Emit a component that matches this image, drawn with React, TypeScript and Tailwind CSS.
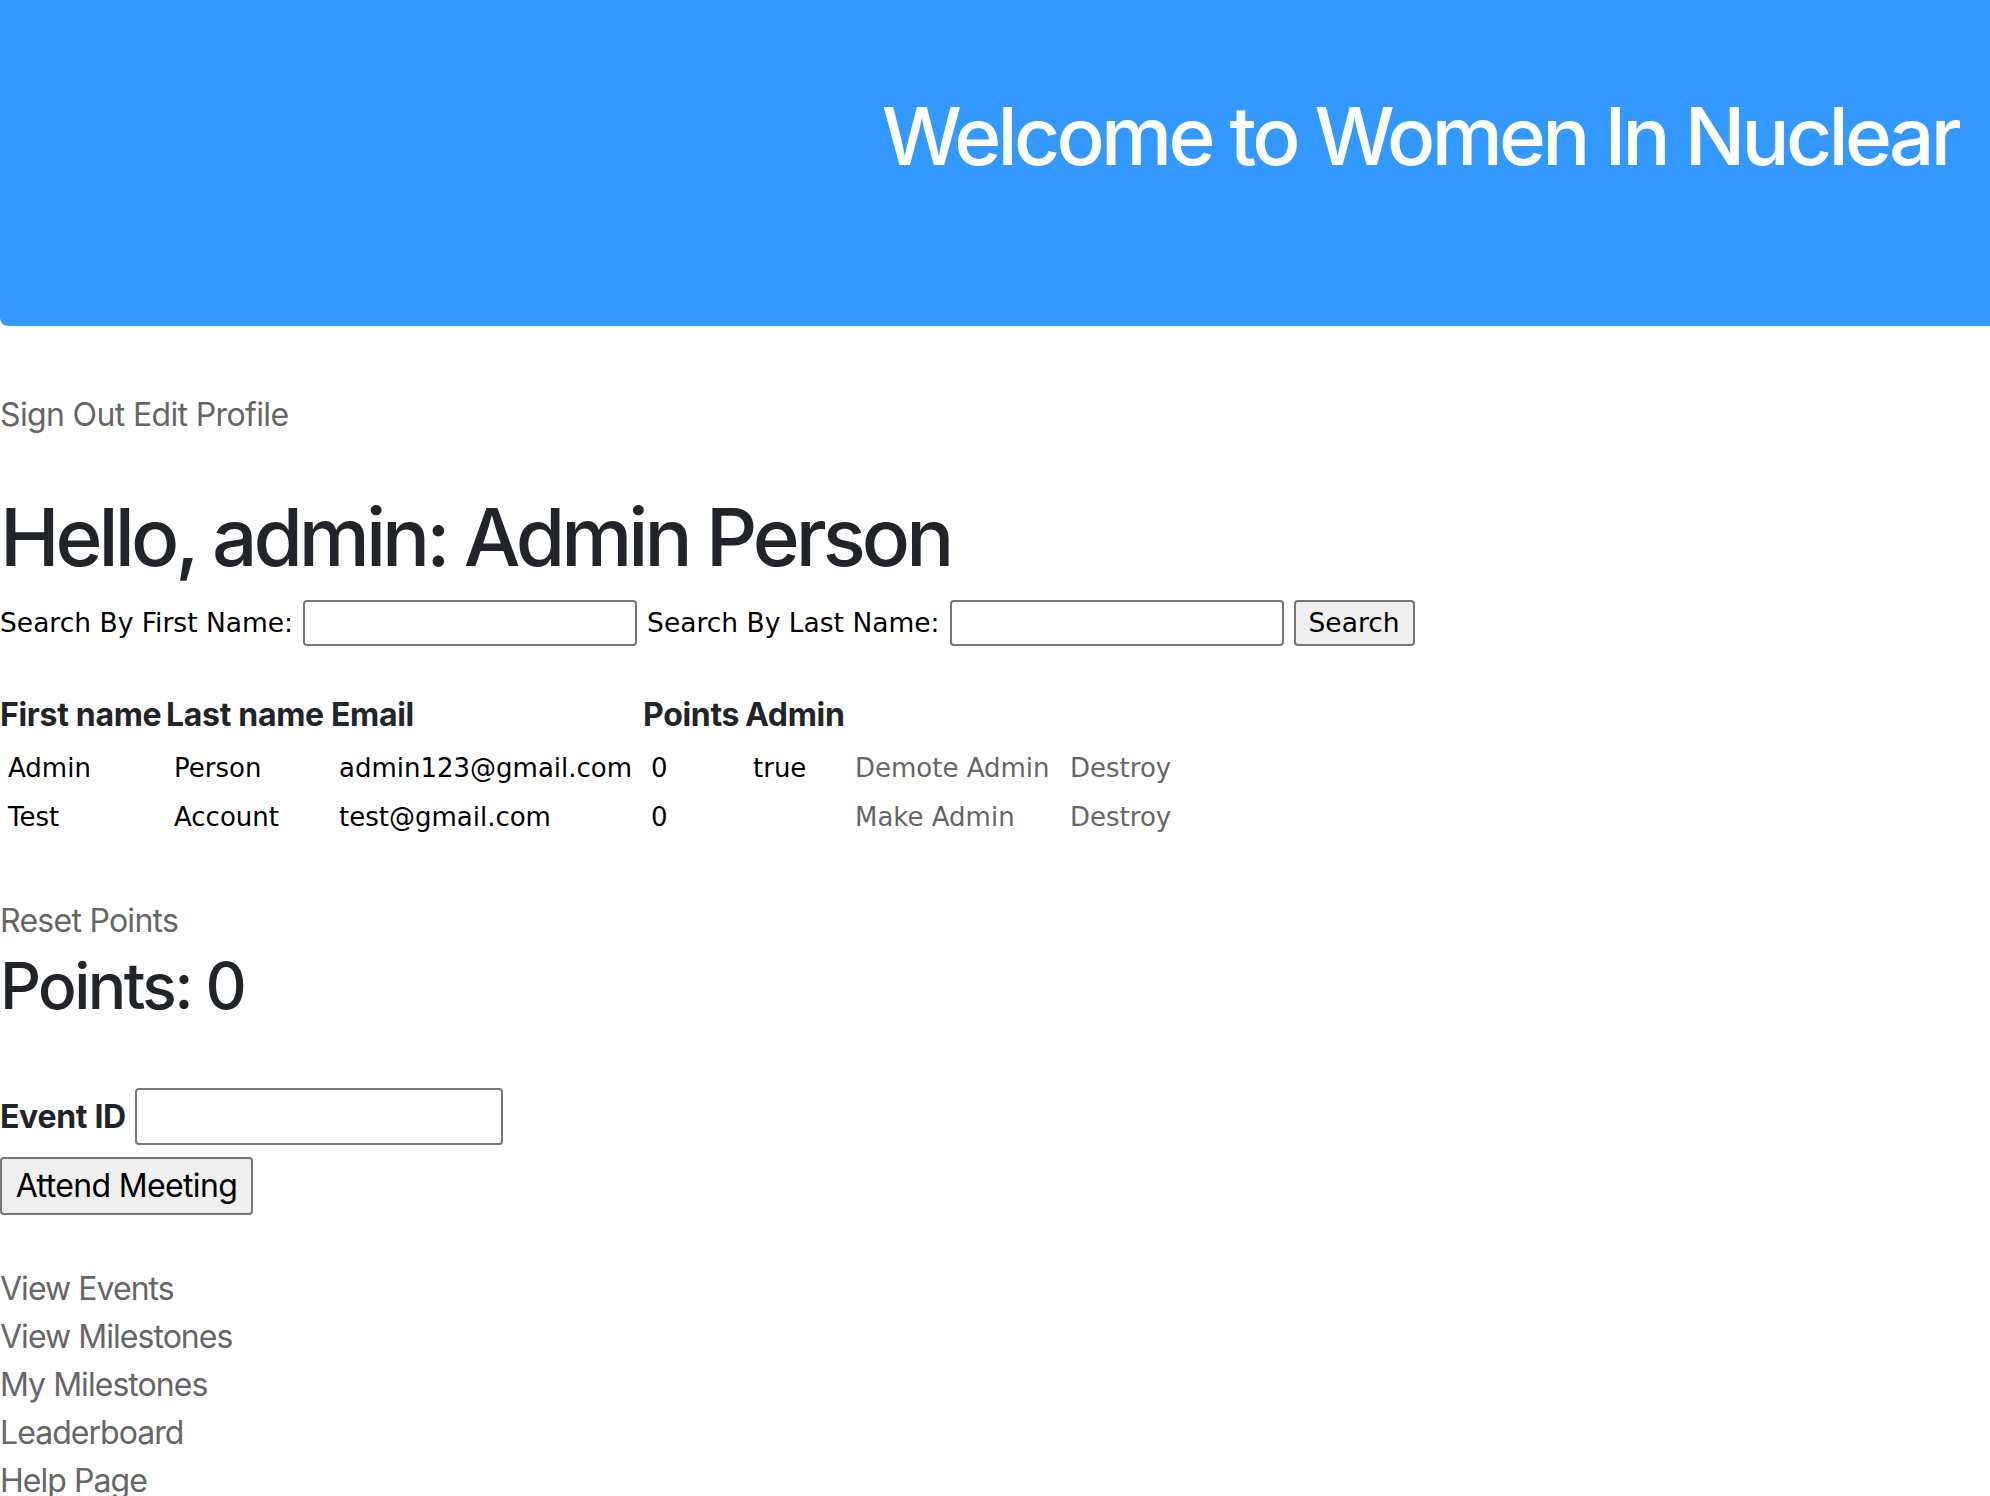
import React from 'react';

const sans = "font-['Inter','Liberation_Sans',sans-serif]";
const verdana = "font-['DejaVu_Sans','Liberation_Sans',sans-serif]";

interface Member {
  first: string;
  last: string;
  email: string;
  points: number;
  admin: boolean;
}

const members: Member[] = [
  { first: 'Admin', last: 'Person', email: 'admin123@gmail.com', points: 0, admin: true },
  { first: 'Test', last: 'Account', email: 'test@gmail.com', points: 0, admin: false },
];

const links = ['View Events', 'View Milestones', 'My Milestones', 'Leaderboard', 'Help Page'];

const App = () => {
  return (
    <div className={`${sans} min-h-screen bg-white text-[#212529]`}>
      {/* Header */}
      <header className="h-[326px] bg-[#3399ff] rounded-bl-[8px] pt-[88px] pr-[32px]">
        <h1 className="text-right text-[80px] leading-[96px] font-medium tracking-[-0.046em] text-white">
          Welcome to Women In Nuclear
        </h1>
      </header>

      {/* Account links */}
      <div className="mt-[65px] text-[32px] leading-[48px] tracking-[-0.02em] text-[#666666]">
        <a>Sign Out</a> <a>Edit Profile</a>
      </div>

      <h1 className="mt-[50px] text-[80px] leading-[96px] font-medium tracking-[-0.05em]">
        Hello, admin: Admin Person
      </h1>

      {/* Search */}
      <div className={`${verdana} mt-[15px] flex items-center gap-[10px] text-[26.5px] text-black`}>
        <label>Search By First Name:</label>
        <input className="w-[334px] h-[46px] border-2 border-[#767676] rounded-[4px] bg-white" />
        <label>Search By Last Name:</label>
        <input className="w-[334px] h-[46px] border-2 border-[#767676] rounded-[4px] bg-white" />
        <button className="w-[121px] h-[46px] border-2 border-[#767676] rounded-[4px] bg-[#efefef]">
          Search
        </button>
      </div>

      {/* Members table */}
      <table className="mt-[49px] border-collapse table-fixed">
        <thead>
          <tr className="h-[40px] text-left text-[32px] leading-[40px] font-bold tracking-[-0.01em]">
            <th className="w-[166px] p-0 whitespace-nowrap">First name</th>
            <th className="w-[165px] p-0 whitespace-nowrap">Last name</th>
            <th className="w-[312px] p-0">Email</th>
            <th className="w-[102px] p-0">Points</th>
            <th className="w-[102px] p-0">Admin</th>
            <th className="w-[215px] p-0"></th>
            <th className="w-[120px] p-0"></th>
          </tr>
        </thead>
        <tbody className={`${verdana} text-[26px] text-black`}>
          <tr className="h-[9px]">
            <td colSpan={7} className="p-0"></td>
          </tr>
          {members.map((m) => (
            <tr key={m.email} className="h-[49px] leading-[49px]">
              <td className="px-2 py-0">{m.first}</td>
              <td className="px-2 py-0">{m.last}</td>
              <td className="px-2 py-0 whitespace-nowrap">{m.email}</td>
              <td className="px-2 py-0">{m.points}</td>
              <td className="px-2 py-0">{m.admin ? 'true' : ''}</td>
              <td className="px-2 py-0 text-[#666666] whitespace-nowrap">{m.admin ? 'Demote Admin' : 'Make Admin'}</td>
              <td className="px-2 py-0 text-[#666666]">Destroy</td>
            </tr>
          ))}
        </tbody>
      </table>

      {/* Points */}
      <div className="mt-[55px] text-[32px] leading-[48px] tracking-[-0.023em] text-[#666666]">
        <a>Reset Points</a>
      </div>
      <h2 className="mt-[2px] text-[64px] leading-[77px] font-medium tracking-[-0.04em]">Points: 0</h2>

      {/* Attend meeting */}
      <div className="mt-[64px] flex items-center h-[57px]">
        <label className="text-[32px] leading-[48px] font-bold tracking-[-0.01em]">Event ID</label>
        <input className="ml-[9px] w-[368px] h-[57px] border-2 border-[#767676] rounded-[4px] bg-white" />
      </div>
      <button className="mt-[12px] w-[253px] h-[58px] border-2 border-[#767676] rounded-[4px] bg-[#efefef] text-[32px] tracking-[-0.02em] text-black">
        Attend Meeting
      </button>

      {/* Navigation */}
      <div className="mt-[50px] flex flex-col text-[32px] leading-[48px] tracking-[-0.03em] text-[#666666]">
        {links.map((l) => (
          <a key={l}>{l}</a>
        ))}
      </div>
    </div>
  );
};

export default App;
